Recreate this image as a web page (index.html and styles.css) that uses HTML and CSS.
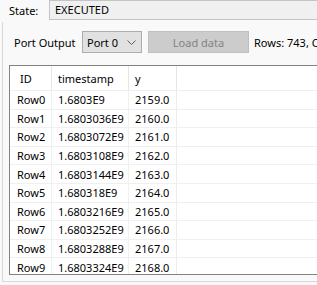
FILE: index.html
```html
<!DOCTYPE html>
<html lang="en">

<head>
    <meta charset="UTF-8">
    <meta name="viewport" content="width=device-width, initial-scale=1.0">
    <title>Node View</title>

    <link rel="stylesheet" href="styles.css">

</head>

<body>
    <!-- Node state -->
    <div class="state-row">
        <span class="state-label">State:</span>
        <div class="state-field">EXECUTED</div>
    </div>

    <div class="panel">
        <!-- Port selection -->
        <div class="port-row">
            <span class="port-label">Port Output</span>
            <div class="combo">
                <span>Port 0</span>
                <svg class="chevron" width="9" height="5" viewBox="0 0 9 5">
                    <polyline points="0.5,0.5 4.5,4.5 8.5,0.5" fill="none" stroke="#606060" stroke-width="1" />
                </svg>
            </div>
            <button class="load-btn" disabled>Load data</button>
            <span class="rows-info">Rows: 743, Columns: 2</span>
        </div>

        <!-- Data table -->
        <div class="table-wrap">
            <table class="data-table">
                <thead>
                    <tr>
                        <th class="col-id">ID</th>
                        <th class="col-ts">timestamp</th>
                        <th class="col-y">y</th>
                        <th class="col-rest"></th>
                    </tr>
                </thead>
                <tbody>
                    <tr><td>Row0</td><td>1.6803E9</td><td>2159.0</td><td></td></tr>
                    <tr><td>Row1</td><td>1.6803036E9</td><td>2160.0</td><td></td></tr>
                    <tr><td>Row2</td><td>1.6803072E9</td><td>2161.0</td><td></td></tr>
                    <tr><td>Row3</td><td>1.6803108E9</td><td>2162.0</td><td></td></tr>
                    <tr><td>Row4</td><td>1.6803144E9</td><td>2163.0</td><td></td></tr>
                    <tr><td>Row5</td><td>1.680318E9</td><td>2164.0</td><td></td></tr>
                    <tr><td>Row6</td><td>1.6803216E9</td><td>2165.0</td><td></td></tr>
                    <tr><td>Row7</td><td>1.6803252E9</td><td>2166.0</td><td></td></tr>
                    <tr><td>Row8</td><td>1.6803288E9</td><td>2167.0</td><td></td></tr>
                    <tr><td>Row9</td><td>1.6803324E9</td><td>2168.0</td><td></td></tr>
                </tbody>
            </table>
        </div>
    </div>
</body>

</html>
```

FILE: styles.css
```css
body {
    margin: 0;
    width: 317px;
    height: 285px;
    overflow: hidden;
    font-family: 'Noto Sans', sans-serif;
    font-size: 11px;
    color: #000;
    background: #f9f9f9;
}

/* State */
.state-row {
    display: flex;
    align-items: center;
    height: 20px;
}

.state-label {
    width: 40px;
    padding-left: 9px;
}

.state-field {
    flex: 1;
    height: 20px;
    margin-top: -1px;
    box-sizing: border-box;
    border: 1px solid #c4c4c4;
    border-right: none;
    background: #f0f0f0;
    padding-left: 5px;
    line-height: 18px;
    white-space: nowrap;
}

/* Panel */
.panel {
    margin: 2px 0 0 2px;
    height: 259px;
    border-left: 1px solid #d8d8d8;
    border-bottom: 1px solid #d8d8d8;
    padding-left: 6px;
}

.port-row {
    display: flex;
    align-items: center;
    height: 22px;
    padding: 9px 0 0 5px;
    white-space: nowrap;
}

.port-row > * {
    flex-shrink: 0;
}

.port-label {
    width: 68px;
}

.combo {
    display: flex;
    align-items: center;
    justify-content: space-between;
    width: 60px;
    height: 22px;
    box-sizing: border-box;
    border: 1px solid #adadad;
    background: #e1e1e1;
    padding: 0 5px 0 4px;
}

.chevron {
    display: block;
}

.load-btn {
    width: 101px;
    height: 22px;
    margin-left: 6px;
    border: 1px solid #bfbfbf;
    background: #cccccc;
    color: #838383;
    font-family: inherit;
    font-size: inherit;
    padding: 0;
}

.rows-info {
    margin-left: 5px;
}

/* Table */
.table-wrap {
    margin-top: 12px;
    height: 208px;
    overflow: hidden;
    border: 1px solid #828282;
    border-right: none;
    background: #fff;
}

.data-table {
    border-collapse: separate;
    border-spacing: 0;
    table-layout: fixed;
    width: 330px;
}

.data-table th,
.data-table td {
    box-sizing: border-box;
    padding: 0 0 0 6px;
    white-space: nowrap;
    overflow: hidden;
}

.data-table th {
    height: 25px;
    font-weight: normal;
    text-align: left;
    border-right: 1px solid #e5e5e5;
    border-bottom: 1px solid #f0f0f0;
}

.data-table th.col-id {
    padding-left: 10px;
}

.col-id {
    width: 42px;
}

.col-ts {
    width: 77px;
}

.col-y {
    width: 48px;
}

.data-table td {
    height: 18.6px;
    border-right: 1px solid #f0f0f0;
    border-bottom: 1px solid #f0f0f0;
}

.data-table td:first-child {
    padding-left: 7px;
}

.data-table td:nth-child(3) {
    border-right-color: #e6edf7;
}
```
